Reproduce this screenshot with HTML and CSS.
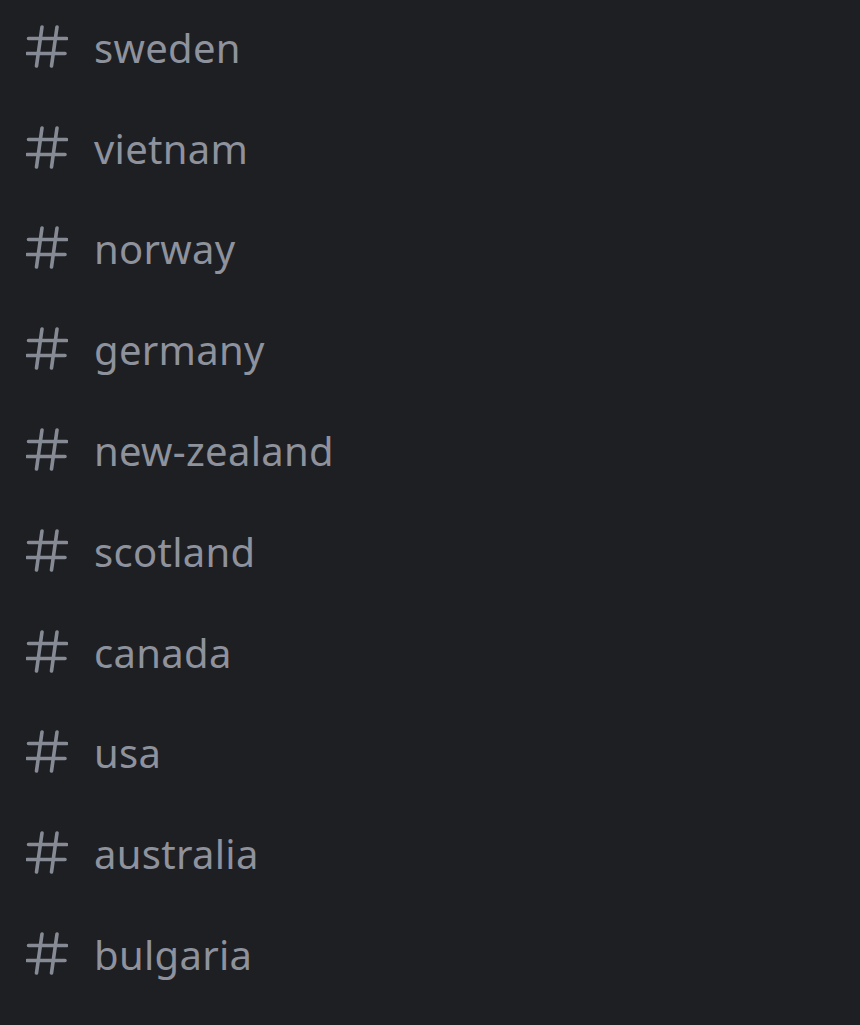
FILE: index.html
```html
<!DOCTYPE html>
<html lang="en">
<head>
    <meta charset="UTF-8">
    <meta name="viewport" content="width=device-width, initial-scale=1.0">
    <title>Channels</title>
    <link rel="stylesheet" href="styles.css">
</head>
<body>

<ul class="channel-list">
    <li class="channel">
        <svg class="channel-icon" viewBox="0 0 42 43"><path d="M16 2 L10.5 41 M31 2 L25.5 41 M2.5 13.5 H40.5 M1 28.5 H39"/></svg>
        <span class="channel-name">sweden</span>
    </li>
    <li class="channel">
        <svg class="channel-icon" viewBox="0 0 42 43"><path d="M16 2 L10.5 41 M31 2 L25.5 41 M2.5 13.5 H40.5 M1 28.5 H39"/></svg>
        <span class="channel-name">vietnam</span>
    </li>
    <li class="channel">
        <svg class="channel-icon" viewBox="0 0 42 43"><path d="M16 2 L10.5 41 M31 2 L25.5 41 M2.5 13.5 H40.5 M1 28.5 H39"/></svg>
        <span class="channel-name">norway</span>
    </li>
    <li class="channel">
        <svg class="channel-icon" viewBox="0 0 42 43"><path d="M16 2 L10.5 41 M31 2 L25.5 41 M2.5 13.5 H40.5 M1 28.5 H39"/></svg>
        <span class="channel-name">germany</span>
    </li>
    <li class="channel">
        <svg class="channel-icon" viewBox="0 0 42 43"><path d="M16 2 L10.5 41 M31 2 L25.5 41 M2.5 13.5 H40.5 M1 28.5 H39"/></svg>
        <span class="channel-name">new-zealand</span>
    </li>
    <li class="channel">
        <svg class="channel-icon" viewBox="0 0 42 43"><path d="M16 2 L10.5 41 M31 2 L25.5 41 M2.5 13.5 H40.5 M1 28.5 H39"/></svg>
        <span class="channel-name">scotland</span>
    </li>
    <li class="channel">
        <svg class="channel-icon" viewBox="0 0 42 43"><path d="M16 2 L10.5 41 M31 2 L25.5 41 M2.5 13.5 H40.5 M1 28.5 H39"/></svg>
        <span class="channel-name">canada</span>
    </li>
    <li class="channel">
        <svg class="channel-icon" viewBox="0 0 42 43"><path d="M16 2 L10.5 41 M31 2 L25.5 41 M2.5 13.5 H40.5 M1 28.5 H39"/></svg>
        <span class="channel-name">usa</span>
    </li>
    <li class="channel">
        <svg class="channel-icon" viewBox="0 0 42 43"><path d="M16 2 L10.5 41 M31 2 L25.5 41 M2.5 13.5 H40.5 M1 28.5 H39"/></svg>
        <span class="channel-name">australia</span>
    </li>
    <li class="channel">
        <svg class="channel-icon" viewBox="0 0 42 43"><path d="M16 2 L10.5 41 M31 2 L25.5 41 M2.5 13.5 H40.5 M1 28.5 H39"/></svg>
        <span class="channel-name">bulgaria</span>
    </li>
</ul>

</body>
</html>
```

FILE: styles.css
```css
body {
    font-family: "Noto Sans", "Open Sans", sans-serif;
    background-color: #1e1f23;
    color: #8e929d;
    margin: 0;
    padding: 0;
    overflow: hidden;
}

.channel-list {
    list-style: none;
    margin: -4px 0 0 0; /* primeira linha um pouco cortada no topo */
    padding: 0 0 0 26px;
}

.channel {
    display: flex;
    align-items: center;
    gap: 26px;
    height: 100.8px;
}

.channel-icon {
    width: 42px;
    height: 43px;
    flex-shrink: 0;
    fill: none;
    stroke: #868a94;
    stroke-width: 3.6;
    stroke-linecap: round;
}

.channel-name {
    font-size: 40px;
    letter-spacing: 0.3px;
    padding-top: 2px;
}
```
